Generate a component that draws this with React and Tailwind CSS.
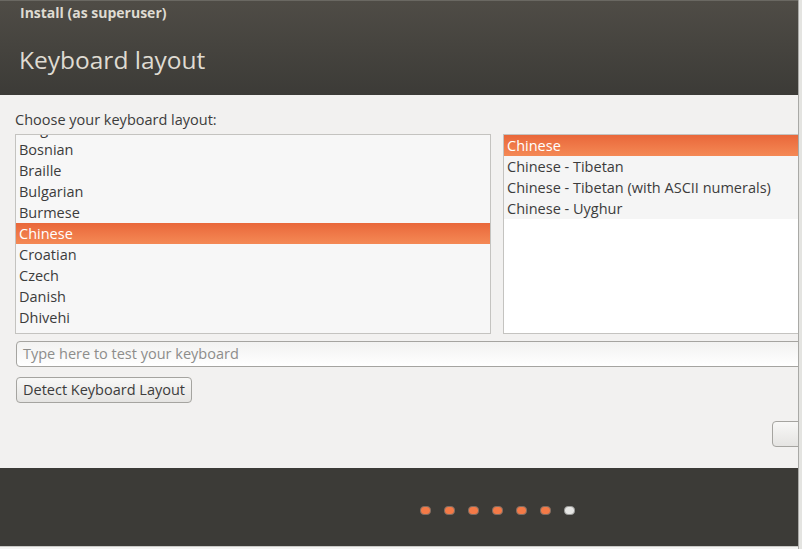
import React from 'react';

const leftRows = ['Belgian', 'Bosnian', 'Braille', 'Bulgarian', 'Burmese', 'Chinese', 'Croatian', 'Czech', 'Danish', 'Dhivehi', 'Dutch'];
const rightRows = ['Chinese', 'Chinese - Tibetan', 'Chinese - Tibetan (with ASCII numerals)', 'Chinese - Uyghur'];

const font = { fontFamily: '"Open Sans", "Noto Sans", sans-serif' };

const Row = ({ label, selected }) => (
  <div
    className={
      'h-[21px] pl-[3px] leading-[21px] text-[14.5px] whitespace-nowrap ' +
      (selected
        ? 'bg-gradient-to-b from-[#e9673a] to-[#f48955] text-white'
        : 'text-[#3c3c3c]')
    }
  >
    {label}
  </div>
);

export default function App() {
  return (
    <div className="flex w-[802px] h-[549px] overflow-hidden bg-[#d9d9d6]" style={font}>
      <div className="flex flex-col w-[798px] h-[549px] overflow-hidden">
        {/* Header */}
        <div className="h-[95px] shrink-0 bg-gradient-to-b from-[#4f4c46] to-[#3c3b37] border-t border-[#6a6862] px-[20px]">
          <div className="pt-[2px] text-[14px] font-bold leading-[20px] text-[#dfdbd2]">Install (as superuser)</div>
          <div className="mt-[22px] -ml-[1px] text-[24.5px] leading-[30px] text-[#dfdbd2]">Keyboard layout</div>
        </div>

        {/* Content */}
        <div className="h-[373px] shrink-0 bg-[#f2f1f0] pl-[15px] overflow-hidden">
          <div className="mt-[15px] text-[14.5px] leading-[20px] text-[#3c3c3c]">Choose your keyboard layout:</div>
          <div className="mt-[4px] flex gap-[12px] w-[820px]">
            <div className="w-[476px] h-[200px] shrink-0 border border-[#c4c3c0] bg-[#f7f7f7] overflow-hidden">
              <div className="-mt-[17px]">
                {leftRows.map((r) => (
                  <Row key={r} label={r} selected={r === 'Chinese'} />
                ))}
              </div>
            </div>
            <div className="w-[320px] h-[200px] shrink-0 border border-[#c4c3c0] bg-white overflow-hidden">
              <div className="bg-[#f5f5f5]">
                {rightRows.map((r, i) => (
                  <Row key={r} label={r} selected={i === 0} />
                ))}
              </div>
            </div>
          </div>
          <div className="mt-[7px] ml-[1px] w-[820px] h-[26px] rounded-[4px] border border-[#a5a4a0] bg-gradient-to-b from-[#f2f2f1] to-white flex items-center pl-[6px] text-[14.5px] text-[#8d8d8b]">
            Type here to test your keyboard
          </div>
          <div className="mt-[10px] ml-[1px] w-[176px] h-[26px] rounded-[4px] border border-[#a5a4a0] bg-gradient-to-b from-[#f8f8f7] to-[#e5e4e2] flex items-center justify-center text-[14.5px] text-[#3c3c3c]">
            Detect Keyboard Layout
          </div>
          <div className="mt-[18px] ml-[757px] w-[80px] h-[26px] rounded-[4px] border border-[#a5a4a0] bg-gradient-to-b from-[#f8f8f7] to-[#e5e4e2]" />
        </div>

        {/* Footer */}
        <div className="h-[78px] shrink-0 bg-[#3c3b37] flex gap-[13px] pl-[420px] pt-[38px]">
          {[0, 1, 2, 3, 4, 5, 6].map((i) => (
            <div
              key={i}
              className={
                'w-[11px] h-[9px] rounded-[4px] border ' +
                (i === 6 ? 'bg-[#e6e6e4] border-[#9a9a98]' : 'bg-[#f47a47] border-[#7d6d64]')
              }
            />
          ))}
        </div>
        <div className="h-[3px] shrink-0 border-t border-[#c9c9c6] bg-[#f4f4f3]" />
      </div>
      <div className="w-[4px] h-[549px] border-l border-[#a9a9a6] bg-[#e4e4e1]" />
    </div>
  );
}
